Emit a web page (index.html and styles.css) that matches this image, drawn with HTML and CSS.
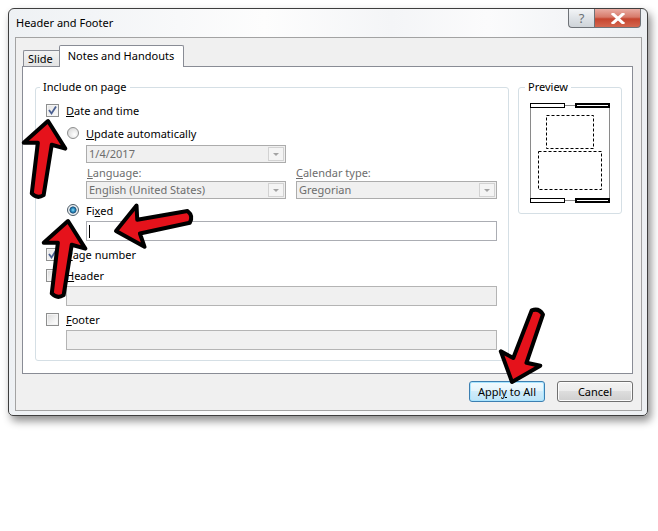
FILE: index.html
```html
<!DOCTYPE html>
<html lang="en">
<head>
	<meta charset="utf-8">
	<title>Header and Footer</title>
	<link rel="stylesheet" href="styles.css">
</head>
<body>
	<div class="window">
		<div class="titlebar">
			<span class="title">Header and Footer</span>
			<div class="caption">
				<span class="cap-btn cap-help">?</span>
				<span class="cap-btn cap-close">
					<svg width="14" height="11" viewBox="0 0 14 11">
						<path d="M2 1 L12 10 M12 1 L2 10" stroke="#fff" stroke-width="3" stroke-linecap="square"/>
					</svg>
				</span>
			</div>
		</div>

		<div class="client">
			<div class="tabs">
				<div class="tab tab-slide">Slide</div>
				<div class="tab tab-active">Notes and Handouts</div>
			</div>

			<div class="panel">
				<fieldset class="group group-include">
					<legend>Include on page</legend>
					<div class="group-body">
						<div class="row mt9">
							<span class="check checked"><svg width="11" height="11" viewBox="0 0 11 11"><path d="M2 5 L4.5 8.5 L9 1.5" fill="none" stroke="#4a5f91" stroke-width="1.8"/></svg></span>
							<span><u>D</u>ate and time</span>
						</div>
						<div class="row mt9 ind1">
							<span class="radio"></span>
							<span><u>U</u>pdate automatically</span>
						</div>
						<div class="combo mt5 ind2 w200">
							<span class="combo-text">1/4/2017</span>
							<span class="combo-arrow"><i></i></span>
						</div>
						<div class="row mt2 ind2 pair">
							<span class="muted lbl-lang"><u>L</u>anguage:</span>
							<span class="muted"><u>C</u>alendar type:</span>
						</div>
						<div class="mt2 ind2 pair">
							<div class="combo w200">
								<span class="combo-text">English (United States)</span>
								<span class="combo-arrow"><i></i></span>
							</div>
							<div class="combo w201">
								<span class="combo-text">Gregorian</span>
								<span class="combo-arrow"><i></i></span>
							</div>
						</div>
						<div class="row mt4 ind1">
							<span class="radio selected"></span>
							<span>Fi<u>x</u>ed</span>
						</div>
						<div class="field mt4 ind2"><span class="caret"></span></div>
						<div class="row mt6">
							<span class="check checked"><svg width="11" height="11" viewBox="0 0 11 11"><path d="M2 5 L4.5 8.5 L9 1.5" fill="none" stroke="#4a5f91" stroke-width="1.8"/></svg></span>
							<span><u>P</u>age number</span>
						</div>
						<div class="row mt7">
							<span class="check"></span>
							<span><u>H</u>eader</span>
						</div>
						<div class="field disabled mt4 ind3"></div>
						<div class="row mt6">
							<span class="check"></span>
							<span><u>F</u>ooter</span>
						</div>
						<div class="field disabled mt4 ind3"></div>
					</div>
				</fieldset>

				<fieldset class="group group-preview">
					<legend>Preview</legend>
					<svg class="preview" width="80" height="100" viewBox="0 0 80 100">
						<path d="M0.5 2 V97 M79.5 2 V97 M35 2.5 H45 M35 97.5 H45" stroke="#8a8a8a" fill="none"/>
						<rect x="0.5" y="0.5" width="34" height="4" fill="#fff" stroke="#000"/>
						<rect x="46" y="1" width="33" height="3" fill="#fff" stroke="#000" stroke-width="2"/>
						<rect x="0.5" y="95.5" width="34" height="4" fill="#fff" stroke="#000"/>
						<rect x="46" y="96" width="33" height="3" fill="#fff" stroke="#000" stroke-width="2"/>
						<rect x="16.5" y="12.5" width="47" height="33" fill="none" stroke="#000" stroke-dasharray="3 2"/>
						<rect x="8.5" y="48.5" width="63" height="38" fill="none" stroke="#000" stroke-dasharray="3 2"/>
					</svg>
				</fieldset>
			</div>

			<div class="buttons">
				<span class="btn btn-default">Appl<u>y</u> to All</span>
				<span class="btn">Cancel</span>
			</div>
		</div>
	</div>

	<!-- red call-out arrows drawn over the dialog -->
	<svg class="arrows" width="658" height="531" viewBox="0 0 658 531">
		<defs>
			<path id="arrow" d="M0 0 L21 25 L7 23 L6 74 Q0 79 -6 74 L-7 23 L-21 25 Z"/>
		</defs>
		<g fill="#e5121b" stroke="#000" stroke-width="4" stroke-linejoin="round">
			<use href="#arrow" transform="translate(48 121) rotate(8)"/>
			<use href="#arrow" transform="translate(116 231) rotate(-101)"/>
			<use href="#arrow" transform="translate(68 221) rotate(8)"/>
			<use href="#arrow" transform="translate(512 382) rotate(-160)"/>
		</g>
	</svg>
</body>
</html>
```

FILE: styles.css
```css
* {
	box-sizing: border-box;
}
body {
	margin: 0;
	width: 658px;
	height: 531px;
	overflow: hidden;
	position: relative;
	background: #fff;
	font-family: "Noto Sans", sans-serif;
	font-size: 11px;
	color: #000;
}
u {
	text-decoration-thickness: 1px;
	text-underline-offset: 1px;
}

/* window frame */
.window {
	width: 640px;
	height: 408px;
	margin: 8px 0 0 8px;
	border: 1px solid #3e3e3e;
	border-radius: 6px 6px 5px 5px;
	background: linear-gradient(to right, #eef1f4, #fdfdfd 40%, #f4f5f7 60%, #fbfbfc 75%, #eceff2);
	box-shadow: 3px 5px 8px rgba(0, 0, 0, 0.45);
}
.titlebar {
	height: 28px;
	display: flex;
	justify-content: space-between;
	align-items: flex-start;
	padding: 0 6px 0 7px;
}
.title {
	line-height: 28px;
}
.caption {
	display: flex;
}
.cap-btn {
	height: 19px;
	display: flex;
	align-items: center;
	justify-content: center;
	border: 1px solid #6e7277;
	border-top: none;
}
.cap-help {
	width: 26px;
	border-right: none;
	border-radius: 0 0 0 4px;
	background: linear-gradient(#f3f5f7, #dfe3e7 50%, #cfd4d9);
	color: #6b7075;
	font-size: 13px;
	line-height: 19px;
}
.cap-close {
	width: 47px;
	border-radius: 0 0 4px 0;
	background: linear-gradient(#e9aca3, #d77a6a 45%, #c6452f 55%, #d4674f);
}

/* client area */
.client {
	height: 374px;
	margin: 0 5px 0 6px;
	padding: 7px 8px 0 6px;
	border: 1px solid #a3a3a3;
	background: #f0f0f0;
}
.tabs {
	display: flex;
	align-items: flex-end;
	height: 21px;
	padding-left: 1px;
}
.tab {
	border: 1px solid #898c95;
	border-bottom: none;
}
.tab-slide {
	height: 16px;
	line-height: 15px;
	padding: 0 6px 0 4px;
	border-right: none;
	border-radius: 2px 0 0 0;
	background: linear-gradient(#f3f3f3, #e3e3e3);
}
.tab-active {
	position: relative;
	z-index: 1;
	height: 22px;
	margin-bottom: -1px;
	line-height: 20px;
	padding: 0 9px 0 8px;
	border-radius: 2px 2px 0 0;
	background: #fff;
}
.panel {
	height: 308px;
	display: flex;
	align-items: flex-start;
	padding-left: 12px;
	border: 1px solid #898c95;
	background: #fff;
}

/* group boxes */
.group {
	margin: 13px 0 0;
	padding: 0;
	min-width: 0;
	border: 1px solid #d5dfe5;
	border-radius: 3px;
}
.group legend {
	padding: 0 3px;
	line-height: 14px;
}
.group-include {
	width: 474px;
}
.group-include legend {
	margin-left: 4px;
}
.group-preview {
	width: 104px;
	margin-left: 9px;
}
.group-preview legend {
	margin-left: 6px;
}
.group-body {
	padding: 0 11px 10px 10px;
}
.preview {
	display: block;
	margin: 9px 0 10px 11px;
}

.row {
	display: flex;
	align-items: center;
	height: 14px;
}
.mt2 { margin-top: 2px; }
.mt4 { margin-top: 4px; }
.mt5 { margin-top: 5px; }
.mt6 { margin-top: 6px; }
.mt7 { margin-top: 7px; }
.mt9 { margin-top: 9px; }
.ind1 { margin-left: 21px; }
.ind2 { margin-left: 40px; }
.ind3 { margin-left: 20px; }
.w200 { width: 200px; }
.w201 { width: 201px; }
.muted {
	color: #6d6d6d;
}
.pair {
	display: flex;
	gap: 10px;
}
.lbl-lang {
	width: 200px;
	padding-left: 1px;
}

/* checkboxes and radios */
.check {
	width: 13px;
	height: 13px;
	margin-right: 7px;
	display: flex;
	align-items: center;
	justify-content: center;
	border: 1px solid #8e8f8f;
	background: linear-gradient(135deg, #d9d9d9, #f7f7f7 70%, #fff);
	box-shadow: inset 0 0 0 1px #f4f4f4;
}
.check.checked {
	background: linear-gradient(135deg, #e4e4e4, #fbfbfb);
}
.radio {
	width: 12px;
	height: 12px;
	margin-right: 7px;
	border-radius: 50%;
	border: 1px solid #8e8f8f;
	background: radial-gradient(circle at 65% 65%, #fff, #e3e3e3 60%, #c9c9c9);
}
.radio.selected {
	border-color: #4b5a66;
	background: radial-gradient(circle at 50% 50%, #8fdcf5 0, #2b8fc2 25%, #1b4f7a 45%, #e9eef1 55%, #f4f4f4);
}

/* combo boxes and text fields */
.combo {
	height: 18px;
	display: flex;
	border: 1px solid #acacac;
	background: #f0f0f0;
	color: #6d6d6d;
}
.combo-text {
	flex: 1;
	line-height: 16px;
	padding-left: 2px;
}
.combo-arrow {
	width: 16px;
	margin: 1px;
	display: flex;
	align-items: center;
	justify-content: center;
	border: 1px solid #d2d2d2;
	background: #f4f4f4;
}
.combo-arrow i {
	width: 0;
	height: 0;
	border-left: 3px solid transparent;
	border-right: 3px solid transparent;
	border-top: 3px solid #a3a3a3;
}
.field {
	height: 20px;
	padding: 3px 0 0 2px;
	border: 1px solid #abadb3;
	background: #fff;
}
.field.disabled {
	border-color: #b4b4b4;
	background: #f0f0f0;
}
.caret {
	display: block;
	width: 1px;
	height: 13px;
	background: #000;
}

/* dialog buttons */
.buttons {
	display: flex;
	justify-content: flex-end;
	gap: 12px;
	margin-top: 7px;
}
.btn {
	width: 76px;
	height: 21px;
	line-height: 19px;
	text-align: center;
	border: 1px solid #707070;
	border-radius: 3px;
	background: linear-gradient(#f2f2f2, #ebebeb 50%, #dddddd 50%, #cfcfcf);
	box-shadow: inset 0 0 0 1px #fcfcfc;
}
.btn-default {
	border-color: #3c7fb1;
	background: linear-gradient(#f2fafe, #e3f4fc 50%, #d0ecfb 50%, #bde4f8);
	box-shadow: inset 0 0 0 1px #a9e5ff;
}

.arrows {
	position: absolute;
	left: 0;
	top: 0;
	pointer-events: none;
}
```
